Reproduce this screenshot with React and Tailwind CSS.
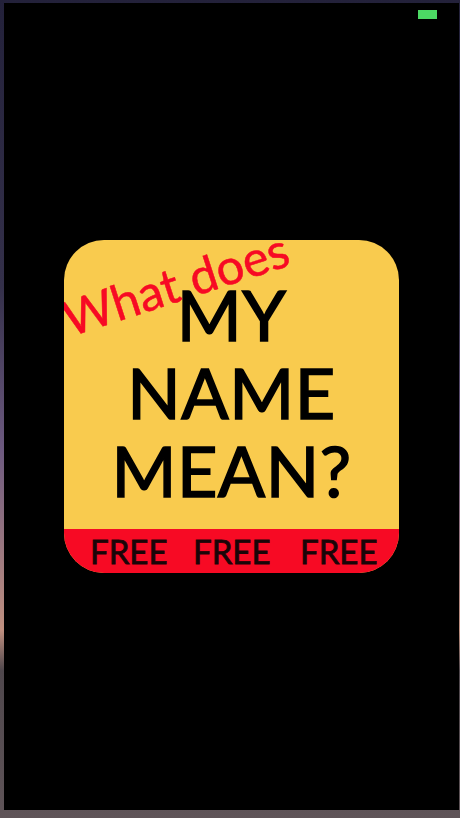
export default function App() {
  return (
    <div className="w-[460px] h-[818px] overflow-hidden bg-[linear-gradient(180deg,#23213a_0%,#34304a_35%,#6d5a80_55%,#c09080_77%,#4f474c_82%,#5f5458_100%)] pt-[3px] pl-[4px] pr-[1px] pb-[8px]" style={{ fontFamily: 'Lato, "Open Sans", sans-serif' }}>
      <div className="relative w-full h-full bg-black flex items-start justify-start pl-[60px] pt-[237px]">
        <div className="absolute top-[7px] right-[22px] w-[19px] h-[9px] bg-[#4cd964]" />
        <div className="relative w-[335px] h-[333px] rounded-[40px] overflow-hidden bg-[#f9cb4e] flex flex-col">
          <div className="h-[289px] pt-[35px] flex flex-col items-center text-black text-[70px] leading-[78px] font-normal tracking-[0.5px] [-webkit-text-stroke:1.6px_black]">
            <div>MY</div>
            <div>NAME</div>
            <div>MEAN?</div>
          </div>
          <div className="h-[44px] bg-[#f70a24] flex items-center text-[#1a0508] text-[33px] leading-[44px] pl-[26px] [-webkit-text-stroke:0.8px_#1a0508]">
            <span className="w-[103px]">FREE</span>
            <span className="w-[107px]">FREE</span>
            <span>FREE</span>
          </div>
          <div className="absolute left-[0px] top-[55px] origin-left -rotate-[18deg] text-[#f70a24] text-[49px] leading-none whitespace-nowrap [-webkit-text-stroke:0.5px_#f70a24]">What does</div>
        </div>
      </div>
    </div>
  );
}
